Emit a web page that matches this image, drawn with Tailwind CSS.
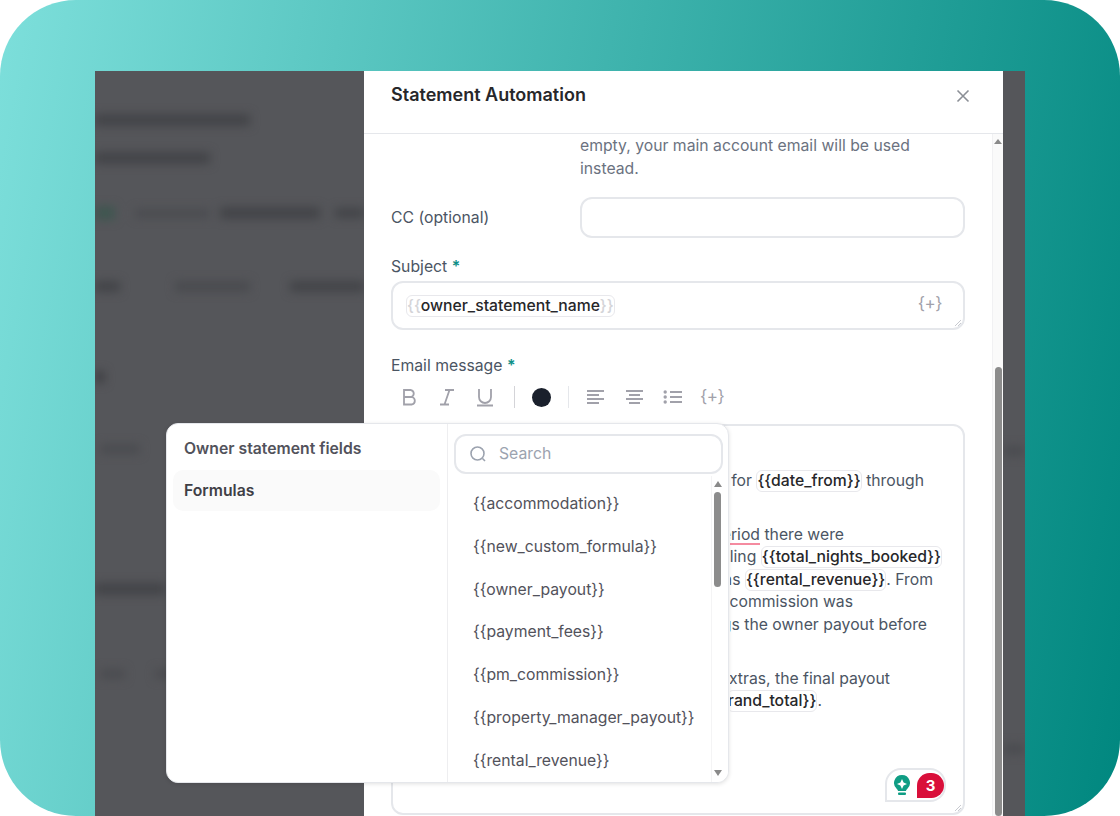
<!DOCTYPE html>
<html lang="en"><head><meta charset="utf-8"><title>Statement Automation</title>
<script src="https://cdn.jsdelivr.net/npm/@tailwindcss/browser@4"></script></head>
<body class="bg-white font-['Inter','Liberation_Sans',sans-serif]">
<main class="relative h-[816px] w-[1120px] overflow-hidden rounded-[76px] bg-[linear-gradient(100deg,#7ddfdb,#00877f)] pl-[95px] pt-[71px]">
  <div class="flex h-[745px] w-[930px] bg-[#55565a]">
    <!-- blurred page behind -->
    <div class="w-[269px] overflow-hidden">
      <div class="flex h-full flex-col blur-[5px]">
        <div class="mt-[43px] h-[12px] w-[155px] bg-[#434448]"></div>
        <div class="mt-[26px] h-[12px] w-[115px] bg-[#434448]"></div>
        <div class="mt-[42px] flex items-center"><div class="h-[14px] w-[20px] bg-[#3f5650]"></div><div class="ml-[20px] h-[9px] w-[75px] bg-[#4b4c50]"></div><div class="ml-[10px] h-[12px] w-[100px] bg-[#434448]"></div><div class="ml-[15px] h-[10px] w-[29px] bg-[#434448]"></div></div>
        <div class="mt-[61px] flex"><div class="h-[11px] w-[25px] bg-[#434448]"></div><div class="ml-[55px] h-[11px] w-[75px] bg-[#4a4b4f]"></div><div class="ml-[40px] h-[11px] w-[74px] bg-[#434448]"></div></div>
        <div class="mt-[79px] h-[12px] w-[10px] bg-[#3f4044]"></div>
        <div class="ml-[5px] mt-[61px] h-[10px] w-[40px] bg-[#4b4c50]"></div>
        <div class="mt-[129px] h-[12px] w-[70px] bg-[#434448]"></div>
        <div class="ml-[5px] mt-[74px] flex gap-[30px]"><div class="h-[10px] w-[25px] bg-[#4b4c50]"></div><div class="h-[10px] w-[20px] bg-[#4b4c50]"></div></div>
      </div>
    </div>
    <!-- modal -->
    <section class="flex w-[639px] flex-col bg-white">
      <header class="flex h-[63px] shrink-0 items-start justify-between border-b border-[#e5e7eb] pl-[27px] pr-[33px]">
        <h1 class="mt-[12px] text-[18px] leading-[24px] font-semibold text-[#27272a]">Statement Automation</h1>
        <svg class="mt-[18px]" width="14" height="14" viewBox="0 0 14 14" fill="none" stroke="#8b8f96" stroke-width="1.6"><path d="M1.500 1.500l11 11M12.500 1.500l-11 11"/></svg>
      </header>
      <div class="relative flex-1 overflow-hidden pl-[27px] pr-[38px] text-[15.75px]">
        <div class="flex">
          <div class="w-[189px]"></div>
          <p class="w-[385px] pt-[1px] leading-[22.5px] text-[#6b7280]">empty, your main account email will be used instead.</p>
        </div>
        <div class="mt-[17px] flex items-center">
          <label class="w-[189px] text-[#4b5563]">CC (optional)</label>
          <div class="h-[41px] w-[385px] rounded-[12px] border-2 border-[#e5e7eb]"></div>
        </div>
        <div class="mt-[17px] leading-[24px] text-[#4b5563]">Subject <span class="font-semibold text-[#0d8f87]">*</span></div>
        <div class="relative mt-[2px] flex h-[49px] items-center justify-between rounded-[12px] border-2 border-[#e5e7eb] pl-[13px] pr-[21px]">
          <span class="rounded-[6px] border border-[#e8e8ec] leading-[20px] font-medium text-[#27272a]"><span class="text-[#d4d4d8]">{{</span>owner_statement_name<span class="text-[#d4d4d8]">}}</span></span>
          <span class="pb-[3px] text-[17px] tracking-[-0.5px] text-[#a1a1aa]">{+}</span>
          <svg class="absolute bottom-[1px] right-[1px]" width="9" height="9" viewBox="0 0 9 9" stroke="#c8cad0" fill="none"><path d="M8 2L2 8M8 5L5 8"/></svg>
        </div>
        <div class="mt-[24px] leading-[24px] text-[#4b5563]">Email message <span class="font-semibold text-[#0d8f87]">*</span></div>
        <div class="mt-[6px] flex h-[26px] items-center pl-[10px] text-[#a1a1aa]">
          <svg width="18" height="20" viewBox="0 0 18 20" fill="none" stroke="#a1a1aa" stroke-width="1.8"><path d="M3 3h7a3.600 3.600 0 0 1 0 7H3zM3 10h8a3.900 3.900 0 0 1 0 7.500H3z"/></svg>
          <svg class="ml-[19px]" width="18" height="20" viewBox="0 0 18 20" fill="none" stroke="#a1a1aa" stroke-width="1.8"><path d="M7 3h9M2 17.500h9M11.500 3L6.500 17.500"/></svg>
          <svg class="ml-[20px]" width="18" height="20" viewBox="0 0 18 20" fill="none" stroke="#a1a1aa" stroke-width="1.8"><path d="M3 2v8a6 6 0 0 0 12 0V2M1 18.500h16"/></svg>
          <div class="ml-[20px] h-[22px] w-px bg-[#d4d4d8]"></div>
          <div class="ml-[17px] h-[19px] w-[19px] rounded-full bg-[#1a202c]"></div>
          <div class="ml-[17px] h-[22px] w-px bg-[#e5e7eb]"></div>
          <svg class="ml-[17px]" width="19" height="16" viewBox="0 0 19 16" fill="none" stroke="#a1a1aa" stroke-width="1.8"><path d="M1 2h17M1 6h12M1 10h17M1 14h12"/></svg>
          <svg class="ml-[20px]" width="19" height="16" viewBox="0 0 19 16" fill="none" stroke="#a1a1aa" stroke-width="1.8"><path d="M1 2h17M4 6h11M1 10h17M4 14h11"/></svg>
          <svg class="ml-[19px]" width="20" height="16" viewBox="0 0 20 16" fill="none" stroke="#a1a1aa" stroke-width="1.8"><path d="M7 3h12M7 8h12M7 13h12"/><circle cx="2.200" cy="3" r="1.700" fill="#a1a1aa" stroke="none"/><circle cx="2.200" cy="8" r="1.700" fill="#a1a1aa" stroke="none"/><circle cx="2.200" cy="13" r="1.700" fill="#a1a1aa" stroke="none"/></svg>
          <span class="ml-[17px] pb-[1px] text-[17px] tracking-[-0.5px]">{+}</span>
        </div>
        <div class="relative mt-[14px] h-[391px] rounded-[12px] border-2 border-[#e5e7eb] pt-[43.5px] leading-[22.5px] text-[#4b5563]">
          <div class="ml-[337px] flex h-[22.5px] w-[194px] items-center justify-end overflow-hidden whitespace-nowrap">for&nbsp;<span class="rounded-[6px] border border-[#e8e8ec] leading-[20px] font-medium text-[#27272a]">{{date_from}}</span>&nbsp;through</div>
          <div class="ml-[337px] mt-[31.5px] flex h-[22.5px] w-[114px] items-center justify-end overflow-hidden whitespace-nowrap"><span class="underline decoration-[#f58ba0] decoration-2 underline-offset-[3px]">period</span>&nbsp;there were</div>
          <div class="ml-[337px] flex h-[22.5px] w-[212px] items-center justify-end overflow-hidden whitespace-nowrap">ling&nbsp;<span class="rounded-[6px] border border-[#e8e8ec] leading-[20px] font-medium text-[#27272a]">{{total_nights_booked}}</span></div>
          <div class="ml-[337px] flex h-[22.5px] w-[203px] items-center justify-end overflow-hidden whitespace-nowrap">as&nbsp;<span class="rounded-[6px] border border-[#e8e8ec] leading-[20px] font-medium text-[#27272a]">{{rental_revenue}}</span>. From</div>
          <div class="ml-[337px] flex h-[22.5px] w-[123px] items-center justify-end overflow-hidden whitespace-nowrap">/commission was</div>
          <div class="ml-[337px] flex h-[22.5px] w-[197px] items-center justify-end overflow-hidden whitespace-nowrap">gs the owner payout before</div>
          <div class="ml-[337px] mt-[31.5px] flex h-[22.5px] w-[160px] items-center justify-end overflow-hidden whitespace-nowrap">xtras, the final payout</div>
          <div class="ml-[337px] flex h-[22.5px] w-[92px] items-center justify-end overflow-hidden whitespace-nowrap"><span class="rounded-[6px] border border-[#e8e8ec] leading-[20px] font-medium text-[#27272a]">rand_total}}</span>.</div>
          <div class="absolute bottom-[11px] right-[17px] flex h-[34px] w-[61px] items-center rounded-[16px] rounded-bl-none border-2 border-[#e5e7eb] bg-white pl-[6px]">
            <svg width="18" height="22" viewBox="0 0 18 22"><path d="M9 1a8 8 0 0 0-5 14.200c.8.700 1 1.300 1 1.800h8c0-.5.200-1.100 1-1.800A8 8 0 0 0 9 1z" fill="#0f9d84"/><path d="M9 5l1.600 3.400L14 10l-3.400 1.600L9 15l-1.600-3.400L4 10l3.400-1.600z" fill="#fff"/><rect x="5" y="18.500" width="8" height="2.500" rx="1" fill="#0f9d84"/></svg>
            <div class="ml-[6px] flex h-[25px] w-[27px] items-center justify-center rounded-[13px] rounded-bl-none bg-[#d90f3a] text-[15px] leading-none font-bold text-white">3</div>
          </div>
          <svg class="absolute bottom-[1px] right-[1px]" width="9" height="9" viewBox="0 0 9 9" stroke="#c8cad0" fill="none"><path d="M8 2L2 8M8 5L5 8"/></svg>
        </div>
        <!-- modal scrollbar -->
        <div class="absolute inset-y-0 right-0 w-[11px] border-l border-[#f1f1f3] bg-[#fafafa]">
          <div class="mx-auto mt-[5px] h-0 w-0 border-x-[4px] border-b-[5px] border-x-transparent border-b-[#8a8a8a]"></div>
          <div class="absolute bottom-0 left-[2px] top-[233px] w-[7px] rounded-full bg-[#8c8c8c]"></div>
        </div>
      </div>
    </section>
    <div class="w-[22px] overflow-hidden"><div class="blur-[5px]"><div class="h-[375px]"></div><div class="h-[10px] w-[22px] bg-[#4b4c50]"></div><div class="h-[288px]"></div><div class="h-[10px] w-[22px] bg-[#4b4c50]"></div></div></div>
  </div>
  <!-- variable picker popover -->
  <div class="absolute left-[166px] top-[423px] flex h-[360px] w-[563px] overflow-hidden rounded-[12px] border border-[#e5e7eb] bg-white text-[15.75px] shadow-[0_1px_4px_rgba(0,0,0,0.12)]">
    <div class="w-[281px] shrink-0 border-r border-[#eeeef0] px-[6px] pt-[14px]">
      <div class="pl-[11px] leading-[22px] font-semibold text-[#52525b]">Owner statement fields</div>
      <div class="mt-[10px] flex h-[41px] w-[267px] items-center rounded-[10px] bg-[#fafafa] pl-[11px] font-semibold text-[#3f3f46]">Formulas</div>
    </div>
    <div class="relative flex-1 pl-[6px] pt-[10px]">
      <div class="flex h-[40px] w-[269px] items-center rounded-[12px] border-2 border-[#e5e7eb] pl-[13px] text-[#9ca3af]">
        <svg width="18" height="18" viewBox="0 0 18 18" fill="none" stroke="#9ca3af" stroke-width="1.6"><circle cx="8.500" cy="8.500" r="6.500"/><path d="M13.500 13.500L16 16"/></svg>
        <span class="ml-[12px]">Search</span>
      </div>
      <ul class="mt-[9px] pl-[19px] leading-[42.8px] text-[#52525b]">
        <li>{{accommodation}}</li>
        <li>{{new_custom_formula}}</li>
        <li>{{owner_payout}}</li>
        <li>{{payment_fees}}</li>
        <li>{{pm_commission}}</li>
        <li>{{property_manager_payout}}</li>
        <li>{{rental_revenue}}</li>
      </ul>
      <div class="absolute bottom-0 right-0 top-[52px] w-[17px] border-l border-[#f4f4f5] bg-white">
        <div class="absolute left-[2px] top-[5px] h-0 w-0 border-x-[4px] border-b-[6px] border-x-transparent border-b-[#8a8a8a]"></div>
        <div class="absolute left-[2px] top-[16px] h-[95px] w-[7px] rounded-full bg-[#8c8c8c]"></div>
        <div class="absolute bottom-[6px] left-[2px] h-0 w-0 border-x-[4px] border-t-[6px] border-x-transparent border-t-[#8a8a8a]"></div>
      </div>
    </div>
  </div>
</main>
</body></html>
